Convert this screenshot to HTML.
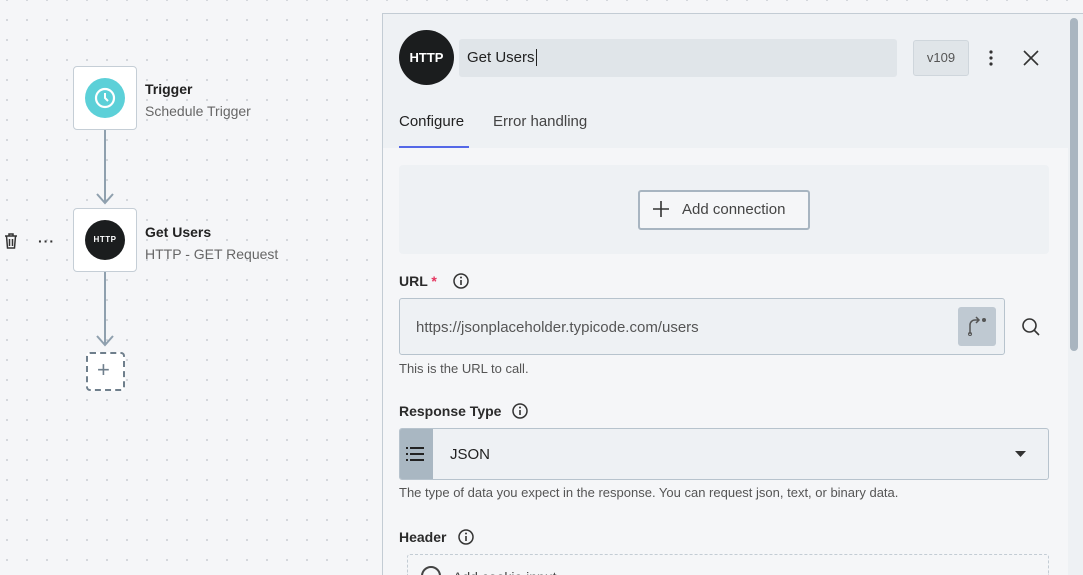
<!DOCTYPE html>
<html style="width:1083px;height:575px;overflow:hidden"><head><meta charset="utf-8"><style>
*{box-sizing:border-box;margin:0;padding:0}
body{width:1083px;height:575px;overflow:hidden;position:relative;font-family:"Liberation Sans",sans-serif;background-color:#f5f6f8;background-image:radial-gradient(circle,#c9cdd2 0.8px,transparent 1px);background-size:20px 20px;background-position:-3px -10px}
.a{position:absolute}
.node{position:absolute;left:73px;width:64px;height:64px;background:#fff;border:1px solid #c5ced6;border-radius:4px}
.t{font-size:14px;color:#222;font-weight:bold}
.s{font-size:14px;color:#666}
.lbl{font-size:14px;color:#2b2b2b;font-weight:bold}
.hint{font-size:13px;color:#555}
</style></head><body>
<div class="node" style="top:66px"><div class="a" style="left:11px;top:11px;width:40px;height:40px;border-radius:50%;background:#5cd0d8"><svg class="a" style="left:8px;top:8px" width="24" height="24" viewBox="0 0 24 24"><circle cx="12" cy="12" r="9" fill="none" stroke="#fff" stroke-width="2.2"/><path d="M12 7v5l3 3" fill="none" stroke="#fff" stroke-width="2"/></svg></div></div>
<div class="a t" style="left:145px;top:81px">Trigger</div>
<div class="a s" style="left:145px;top:103px">Schedule Trigger</div>
<div class="a" style="left:104px;top:130px;width:2px;height:72px;background:#8fa0ae"></div>
<svg class="a" style="left:95px;top:192px" width="20" height="14"><path d="M2 2l8 9 8-9" fill="none" stroke="#8fa0ae" stroke-width="2"/></svg>
<div class="node" style="top:208px"><div class="a" style="left:11px;top:11px;width:40px;height:40px;border-radius:50%;background:#1b1d1e;color:#fff;font-size:8px;font-weight:bold;text-align:center;line-height:40px;letter-spacing:0.5px">HTTP</div></div>
<div class="a t" style="left:145px;top:224px">Get Users</div>
<div class="a s" style="left:145px;top:246px">HTTP - GET Request</div>
<svg class="a" style="left:3px;top:232px" width="16" height="18" viewBox="0 0 16 18"><path d="M2 4h12M6 4V2h4v2M3.5 4l1 12h7l1-12M6.5 7v7M9.5 7v7" fill="none" stroke="#333" stroke-width="1.5"/></svg>
<div class="a" style="left:38px;top:233px;font-size:14px;color:#333;font-weight:bold;letter-spacing:1px">···</div>
<div class="a" style="left:104px;top:272px;width:2px;height:72px;background:#8fa0ae"></div>
<svg class="a" style="left:95px;top:334px" width="20" height="14"><path d="M2 2l8 9 8-9" fill="none" stroke="#8fa0ae" stroke-width="2"/></svg>
<div class="a" style="left:86px;top:352px;width:39px;height:39px;border:2px dashed #6f7f8c;border-radius:4px;background:#fff"></div>
<div class="a" style="left:97px;top:360px;font-size:22px;color:#6f7f8c;line-height:20px">+</div>
<div class="a" style="left:382px;top:13px;width:701px;height:562px;background:#f5f6f8;border-left:1px solid #c3ccd4;border-top:1px solid #c3ccd4"></div>
<div class="a" style="left:383px;top:14px;width:685px;height:134px;background:#eef1f4"></div>
<div class="a" style="left:399px;top:30px;width:55px;height:55px;border-radius:50%;background:#1b1d1e;color:#fff;font-size:13px;font-weight:bold;text-align:center;line-height:55px">HTTP</div>
<div class="a" style="left:459px;top:39px;width:438px;height:38px;background:#e0e5e9;border-radius:3px;font-size:15px;color:#222;padding:10px 8px">Get Users<span style="border-left:1px solid #222;margin-left:1px"></span></div>
<div class="a" style="left:913px;top:40px;width:56px;height:36px;background:#e0e5e9;border:1px solid #cfd6dc;border-radius:3px;font-size:13px;color:#555;text-align:center;line-height:34px">v109</div>
<svg class="a" style="left:985px;top:48px" width="12" height="20"><circle cx="6" cy="4" r="1.6" fill="#333"/><circle cx="6" cy="10" r="1.6" fill="#333"/><circle cx="6" cy="16" r="1.6" fill="#333"/></svg>
<svg class="a" style="left:1022px;top:49px" width="18" height="18"><path d="M2 2l14 14M16 2L2 16" stroke="#333" stroke-width="1.6"/></svg>
<div class="a" style="left:399px;top:113px;font-size:15px;color:#222">Configure</div>
<div class="a" style="left:493px;top:113px;font-size:15px;color:#444">Error handling</div>
<div class="a" style="left:399px;top:146px;width:70px;height:2px;background:#5468e7"></div>
<div class="a" style="left:399px;top:165px;width:650px;height:89px;background:#eef1f4;border-radius:4px"></div>
<div class="a" style="left:638px;top:190px;width:172px;height:40px;border:2px solid #a8b5c1;border-radius:3px;background:#f5f6f8;font-size:15px;color:#444;padding:9px 0 0 42px">Add connection</div>
<svg class="a" style="left:652px;top:200px" width="18" height="18"><path d="M9 1v16M1 9h16" stroke="#333" stroke-width="1.6"/></svg>
<div class="a lbl" style="left:399px;top:273px">URL <span style="color:#e5345f">*</span></div>
<svg class="a" style="left:452px;top:272px" width="18" height="18"><circle cx="9" cy="9" r="7" fill="none" stroke="#333" stroke-width="1.5"/><path d="M9 8v5" stroke="#333" stroke-width="1.6"/><circle cx="9" cy="5.5" r="1" fill="#333"/></svg>
<div class="a" style="left:399px;top:298px;width:606px;height:57px;background:#eef1f4;border:1px solid #b7c3cd;border-radius:3px;font-size:15px;color:#555;padding:20px 16px">https://jsonplaceholder.typicode.com/users</div>
<div class="a" style="left:958px;top:307px;width:38px;height:39px;background:#bfc9d2;border-radius:3px"></div>
<svg class="a" style="left:965px;top:315px" width="24" height="22"><path d="M5 19v-9a5 5 0 0 1 5-5h3M11 2l3 3-3 3" fill="none" stroke="#555" stroke-width="1.5"/><circle cx="5" cy="19" r="1.5" fill="none" stroke="#555"/><circle cx="19" cy="5" r="2" fill="#555"/></svg>
<svg class="a" style="left:1021px;top:317px" width="20" height="20"><circle cx="8.5" cy="8.5" r="6.5" fill="none" stroke="#333" stroke-width="1.6"/><path d="M13 13l5 5" stroke="#333" stroke-width="1.6"/></svg>
<div class="a hint" style="left:399px;top:361px">This is the URL to call.</div>
<div class="a lbl" style="left:399px;top:403px">Response Type</div>
<svg class="a" style="left:511px;top:402px" width="18" height="18"><circle cx="9" cy="9" r="7" fill="none" stroke="#333" stroke-width="1.5"/><path d="M9 8v5" stroke="#333" stroke-width="1.6"/><circle cx="9" cy="5.5" r="1" fill="#333"/></svg>
<div class="a" style="left:399px;top:428px;width:650px;height:52px;background:#eef1f4;border:1px solid #b7c3cd;border-radius:3px;overflow:hidden"><div class="a" style="left:0;top:0;width:33px;height:52px;background:#a9b7c2"></div></div>
<svg class="a" style="left:406px;top:446px" width="20" height="16"><g fill="#222"><rect x="0" y="1" width="2" height="2"/><rect x="0" y="7" width="2" height="2"/><rect x="0" y="13" width="2" height="2"/><rect x="4" y="1" width="14" height="2"/><rect x="4" y="7" width="14" height="2"/><rect x="4" y="13" width="14" height="2"/></g></svg>
<div class="a" style="left:450px;top:446px;font-size:15px;color:#222">JSON</div>
<svg class="a" style="left:1015px;top:450px" width="12" height="8"><path d="M0 1h11L5.5 7z" fill="#333"/></svg>
<div class="a hint" style="left:399px;top:485px">The type of data you expect in the response. You can request json, text, or binary data.</div>
<div class="a lbl" style="left:399px;top:529px">Header</div>
<svg class="a" style="left:457px;top:528px" width="18" height="18"><circle cx="9" cy="9" r="7" fill="none" stroke="#333" stroke-width="1.5"/><path d="M9 8v5" stroke="#333" stroke-width="1.6"/><circle cx="9" cy="5.5" r="1" fill="#333"/></svg>
<div class="a" style="left:407px;top:554px;width:642px;height:21px;border:1px dashed #c3ccd4;border-bottom:none;border-radius:3px 3px 0 0;overflow:hidden">
<div class="a" style="left:13px;top:11px;width:20px;height:20px;border:2px solid #444;border-radius:50%"></div>
<div class="a" style="left:45px;top:14px;font-size:14px;color:#444;white-space:nowrap">Add cookie input</div></div>
<div class="a" style="left:1068px;top:14px;width:15px;height:561px;background:#eef1f4"></div>
<div class="a" style="left:1070px;top:18px;width:8px;height:333px;background:#a9b5c0;border-radius:4px"></div>
</body></html>
